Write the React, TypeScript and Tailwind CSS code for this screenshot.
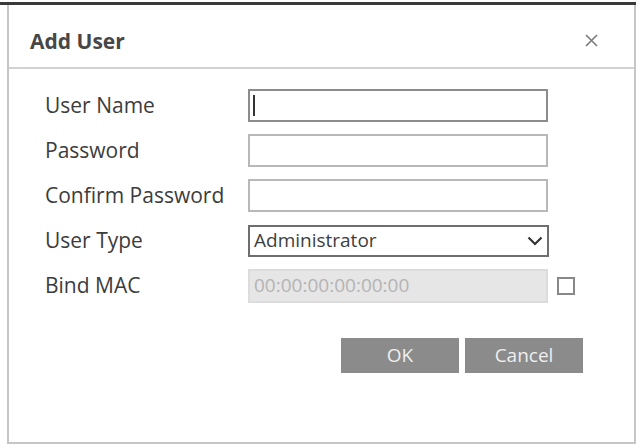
import React from 'react';

const FONT = { fontFamily: '"Open Sans", "Liberation Sans", sans-serif' };

function Row({ label, children }: { label: string; children: React.ReactNode }) {
  return (
    <div className="flex items-center h-[33px]">
      <div className="w-[203px] text-[21px] text-[#3c3c3c] leading-none">{label}</div>
      {children}
    </div>
  );
}

export default function App() {
  return (
    <div className="w-[640px] h-[448px] bg-white overflow-hidden" style={FONT}>
      {/* dark strip on top */}
      <div className="mt-[2px] h-[3px] w-[636px] bg-[#3a3a3a]" />

      {/* dialog */}
      <div className="ml-[7px] w-[629px] h-[439px] border-x-2 border-b-2 border-[#c6c6c6] bg-white flex flex-col">
        {/* header */}
        <div className="h-[64px] flex items-center justify-between pt-[12px] pl-[21px] pr-[36px] border-b-2 border-[#d2d2d2]">
          <span className="text-[21px] font-bold text-[#474747]">Add User</span>
          <svg width="13" height="13" viewBox="0 0 13 13" className="mb-[4px]">
            <path d="M1 1 L12 12 M12 1 L1 12" stroke="#7a7a7a" strokeWidth="1.6" />
          </svg>
        </div>

        {/* form */}
        <div className="pl-[36px] pt-[20px] flex flex-col gap-[12px]">
          <Row label="User Name">
            <div className="w-[300px] h-[33px] border-2 border-[#8c8c8c] bg-white flex items-center pl-[3px]">
              <div className="w-[2px] h-[21px] bg-[#333]" />
            </div>
          </Row>
          <Row label="Password">
            <div className="w-[300px] h-[33px] border-2 border-[#b8b8b8] bg-white" />
          </Row>
          <Row label="Confirm Password">
            <div className="w-[300px] h-[33px] border-2 border-[#b8b8b8] bg-white" />
          </Row>
          <Row label="User Type">
            <div className="w-[301px] h-[32px] border-2 border-[#6e6e6e] bg-white flex items-center justify-between pl-[4px] pr-[4px]">
              <span className="text-[19px] text-[#3e3e3e] leading-none">Administrator</span>
              <svg width="16" height="10" viewBox="0 0 16 10">
                <path d="M1.5 1.5 L8 8 L14.5 1.5" fill="none" stroke="#333" strokeWidth="2.2" />
              </svg>
            </div>
          </Row>
          <Row label="Bind MAC">
            <div className="w-[300px] h-[34px] border-2 border-[#dcdcdc] bg-[#e6e6e6] flex items-center pl-[4px]">
              <span className="text-[19px] text-[#b4b4b4] leading-none">00:00:00:00:00:00</span>
            </div>
            <div className="ml-[9px] w-[18px] h-[18px] border-2 border-[#888] bg-white" />
          </Row>
        </div>

        {/* buttons */}
        <div className="pl-[332px] pt-[36px] flex gap-[6px]">
          <button className="w-[118px] h-[35px] bg-[#8b8b8b] text-[19px] text-[#eeeeee] leading-none">OK</button>
          <button className="w-[118px] h-[35px] bg-[#8b8b8b] text-[19px] text-[#eeeeee] leading-none">Cancel</button>
        </div>
      </div>
    </div>
  );
}
